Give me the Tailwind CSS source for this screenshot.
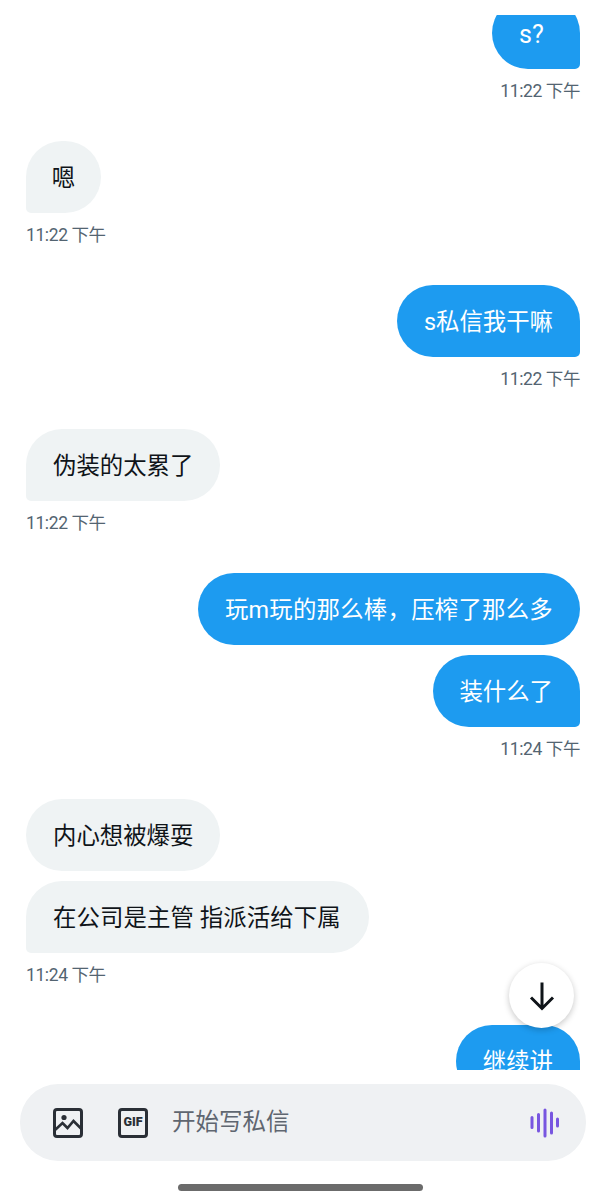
<!DOCTYPE html>
<html lang="zh-CN">
<head>
    <meta charset="UTF-8">
    <meta name="viewport" content="width=device-width, initial-scale=1.0">
    <title>私信</title>
    <script src="https://cdn.jsdelivr.net/npm/@tailwindcss/browser@4"></script>
</head>
<body class="bg-white font-['Roboto','Noto_Sans_CJK_SC',sans-serif]">
    <div class="relative w-[606px] h-[1200px] overflow-hidden">
        <!-- messages -->
        <div class="mt-[15px] h-[1055px] overflow-hidden px-[26px] text-[23.4px] leading-[75px]">
            <div class="-mt-[18px] flex flex-col items-end">
                <div class="w-[88px] h-[72px] pl-[27px] rounded-[36px] rounded-br-[5px] bg-[#1d9bf0] text-white text-[25px]">s?</div>
                <div class="mt-[10px] mb-[38px] h-[24px] text-[17.5px] tracking-[-0.4px] leading-[24px] text-[#536471]">11:22 下午</div>
            </div>
            <div class="flex flex-col items-start">
                <div class="w-[75px] h-[72px] text-center rounded-[36px] rounded-bl-[5px] bg-[#eff3f4] text-[#0f1419]">嗯</div>
                <div class="mt-[10px] mb-[38px] h-[24px] text-[17.5px] tracking-[-0.4px] leading-[24px] text-[#536471]">11:22 下午</div>
            </div>
            <div class="flex flex-col items-end">
                <div class="h-[72px] px-[27px] rounded-[36px] rounded-br-[5px] bg-[#1d9bf0] text-white">s私信我干嘛</div>
                <div class="mt-[10px] mb-[38px] h-[24px] text-[17.5px] tracking-[-0.4px] leading-[24px] text-[#536471]">11:22 下午</div>
            </div>
            <div class="flex flex-col items-start">
                <div class="h-[72px] px-[27px] rounded-[36px] rounded-bl-[5px] bg-[#eff3f4] text-[#0f1419]">伪装的太累了</div>
                <div class="mt-[10px] mb-[38px] h-[24px] text-[17.5px] tracking-[-0.4px] leading-[24px] text-[#536471]">11:22 下午</div>
            </div>
            <div class="flex flex-col items-end gap-[10px]">
                <div class="h-[72px] px-[27px] rounded-[36px] bg-[#1d9bf0] text-white tracking-[0.25px]">玩m玩的那么棒，压榨了那么多</div>
                <div class="h-[72px] pl-[26px] pr-[27px] rounded-[36px] rounded-br-[5px] bg-[#1d9bf0] text-white">装什么了</div>
                <div class="mb-[38px] h-[24px] text-[17.5px] tracking-[-0.4px] leading-[24px] text-[#536471]">11:24 下午</div>
            </div>
            <div class="flex flex-col items-start gap-[10px]">
                <div class="h-[72px] px-[27px] rounded-[36px] bg-[#eff3f4] text-[#0f1419]">内心想被爆耍</div>
                <div class="h-[72px] pl-[27px] pr-[28px] rounded-[36px] rounded-bl-[5px] bg-[#eff3f4] text-[#0f1419] tracking-[0.1px]">在公司是主管 指派活给下属</div>
                <div class="mb-[38px] h-[24px] text-[17.5px] tracking-[-0.4px] leading-[24px] text-[#536471]">11:24 下午</div>
            </div>
            <div class="flex flex-col items-end">
                <div class="h-[72px] px-[27px] rounded-[36px] rounded-br-[5px] bg-[#1d9bf0] text-white">继续讲</div>
            </div>
        </div>

        <!-- scroll to bottom -->
        <button class="absolute left-[509px] top-[963px] w-[65px] h-[65px] rounded-full bg-white shadow-[0_2px_6px_rgba(0,0,0,0.22)] flex items-center justify-center">
            <svg width="30" height="30" viewBox="0 0 30 30" fill="none" stroke="#0f1419" stroke-width="3">
                <path d="M15 1.5V27M4 16.5L15 27.5L26 16.5"/>
            </svg>
        </button>

        <!-- composer -->
        <div class="mt-[14px] mx-[20px] h-[77px] rounded-[38px] bg-[#eff1f3] flex items-center pl-[33px] pr-[26px]">
            <svg width="30" height="30" viewBox="0 0 30 30" fill="none" stroke="#2a2f36" stroke-width="3" class="shrink-0">
                <rect x="1.5" y="1.5" width="27" height="27" rx="2.5"/>
                <path d="M2 22L9.5 15L14.5 20L20.5 13L28 20.5" stroke-width="2.6"/>
                <circle cx="11" cy="9.5" r="2.6" fill="#2a2f36" stroke="none"/>
            </svg>
            <div class="ml-[35px] w-[30px] h-[30px] shrink-0 rounded-[4px] border-[3px] border-[#2a2f36] flex items-center justify-center text-[12.5px] leading-none font-black text-[#2a2f36] font-['Roboto',sans-serif]">GIF</div>
            <div class="ml-[24px] flex-1 text-[23.5px] text-[#5f6670]">开始写私信</div>
            <svg width="30" height="30" viewBox="0 0 30 30" stroke="#7856e0" stroke-width="3" stroke-linecap="round" class="shrink-0">
                <path d="M2 9.5V19.5M8.5 6.5V23M15 2V28M21.5 5V25M27.5 11V18"/>
            </svg>
        </div>

        <!-- home bar -->
        <div class="mt-[23px] ml-[178px] w-[245px] h-[7px] rounded-full bg-[#6b6b6b]"></div>
    </div>
</body>
</html>
